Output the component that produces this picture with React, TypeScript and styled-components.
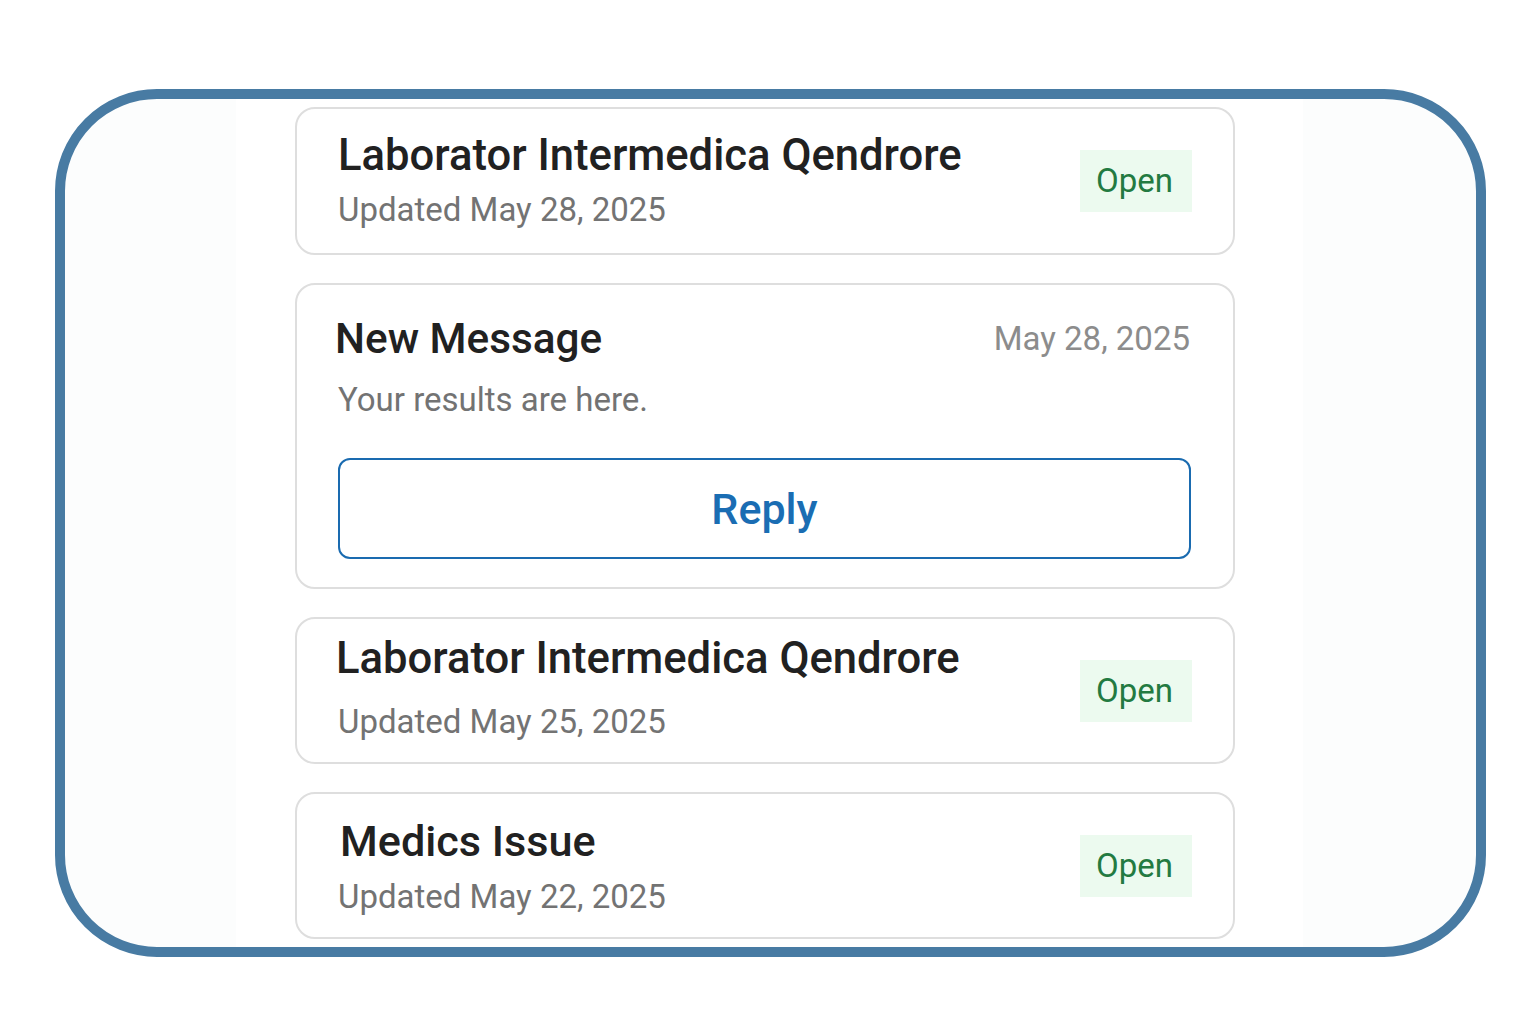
import React from 'react';
import styled, { createGlobalStyle } from 'styled-components';

const GlobalStyle = createGlobalStyle`
	html, body {
		margin: 0;
		padding: 0;
		background: #ffffff;
		font-family: Roboto, "Noto Sans", "Liberation Sans", sans-serif;
	}
	* {
		box-sizing: border-box;
	}
`;

type Ticket = {
	id: number;
	title: string;
	updated: string;
	height: number;
	padTop: number;
	subGap: number;
	indent: number;
	size: number;
};

const Page = styled.div`
	width: 1540px;
	height: 1016px;
	padding: 89px 0 0 55px;
`;

const Frame = styled.div`
	width: 1431px;
	height: 868px;
	border: 10px solid #487ba3;
	border-radius: 102px;
	background: #fcfdfd;
	overflow: hidden;
`;

const Column = styled.div`
	width: 1067px;
	height: 100%;
	margin-left: 171px;
	background: #ffffff;
	padding: 8px 0 0 59px;
	display: flex;
	flex-direction: column;
	gap: 28px;
`;

const Card = styled.div<{ $height: number }>`
	width: 940px;
	height: ${(p) => p.$height}px;
	border: 2px solid #dedede;
	border-radius: 20px;
	background: #ffffff;
	padding: 0 41px;
	flex-shrink: 0;
`;

const TicketCard = styled(Card)`
	display: flex;
	justify-content: space-between;
	align-items: stretch;
`;

const TicketText = styled.div<{ $padTop: number }>`
	display: flex;
	flex-direction: column;
	padding-top: ${(p) => p.$padTop}px;
`;

const Title = styled.div<{ $size: number; $indent?: number }>`
	margin-left: ${(p) => p.$indent || 0}px;
	font-size: ${(p) => p.$size}px;
	line-height: 52px;
	font-weight: 500;
	color: #212121;
	white-space: nowrap;
`;

const Sub = styled.div<{ $gap: number }>`
	margin-top: ${(p) => p.$gap}px;
	font-size: 33px;
	line-height: 42px;
	color: #737373;
	white-space: nowrap;
`;

const Badge = styled.span`
	align-self: center;
	height: 62px;
	padding: 0 19px 0 16px;
	background: #ecfaef;
	color: #237a41;
	font-size: 33px;
	line-height: 62px;
`;

const MessageCard = styled(Card)`
	padding-top: 28px;
`;

const MessageHead = styled.div`
	display: flex;
	justify-content: space-between;
	align-items: flex-start;
`;

const DateText = styled.span`
	margin: 6px 2px 0 0;
	font-size: 33px;
	line-height: 40px;
	color: #8c8c8c;
`;

const Body = styled.div`
	margin-top: 15px;
	font-size: 33px;
	line-height: 40px;
	color: #737373;
`;

const ReplyButton = styled.button`
	display: block;
	width: 853px;
	height: 101px;
	margin: 38px 0 0 0;
	border: 2px solid #1a6bb0;
	border-radius: 12px;
	background: #ffffff;
	color: #1a6db3;
	font-family: Roboto, "Noto Sans", "Liberation Sans", sans-serif;
	font-size: 43px;
	font-weight: 500;
	cursor: pointer;
`;

const tickets: Array<Ticket> = [
	{ id: 1, title: 'Laborator Intermedica Qendrore', updated: 'Updated May 28, 2025', height: 148, padTop: 21, subGap: 7, indent: 0, size: 43.6 },
	{ id: 2, title: 'Laborator Intermedica Qendrore', updated: 'Updated May 25, 2025', height: 147, padTop: 14, subGap: 16, indent: -2, size: 43.6 },
	{ id: 3, title: 'Medics Issue', updated: 'Updated May 22, 2025', height: 147, padTop: 22, subGap: 8, indent: 2, size: 43.2 },
];

const TicketItem = ({ ticket }: { ticket: Ticket }) => (
	<TicketCard $height={ticket.height}>
		<TicketText $padTop={ticket.padTop}>
			<Title $size={ticket.size} $indent={ticket.indent}>{ticket.title}</Title>
			<Sub $gap={ticket.subGap}>{ticket.updated}</Sub>
		</TicketText>
		<Badge>Open</Badge>
	</TicketCard>
);

const App = () => {
	return (
		<Page>
			<GlobalStyle />
			<Frame>
				<Column>
					<TicketItem ticket={tickets[0]} />
					<MessageCard $height={306}>
						<MessageHead>
							<Title $size={42.3} $indent={-3}>New Message</Title>
							<DateText>May 28, 2025</DateText>
						</MessageHead>
						<Body>Your results are here.</Body>
						<ReplyButton>Reply</ReplyButton>
					</MessageCard>
					<TicketItem ticket={tickets[1]} />
					<TicketItem ticket={tickets[2]} />
				</Column>
			</Frame>
		</Page>
	);
};

export default App;
